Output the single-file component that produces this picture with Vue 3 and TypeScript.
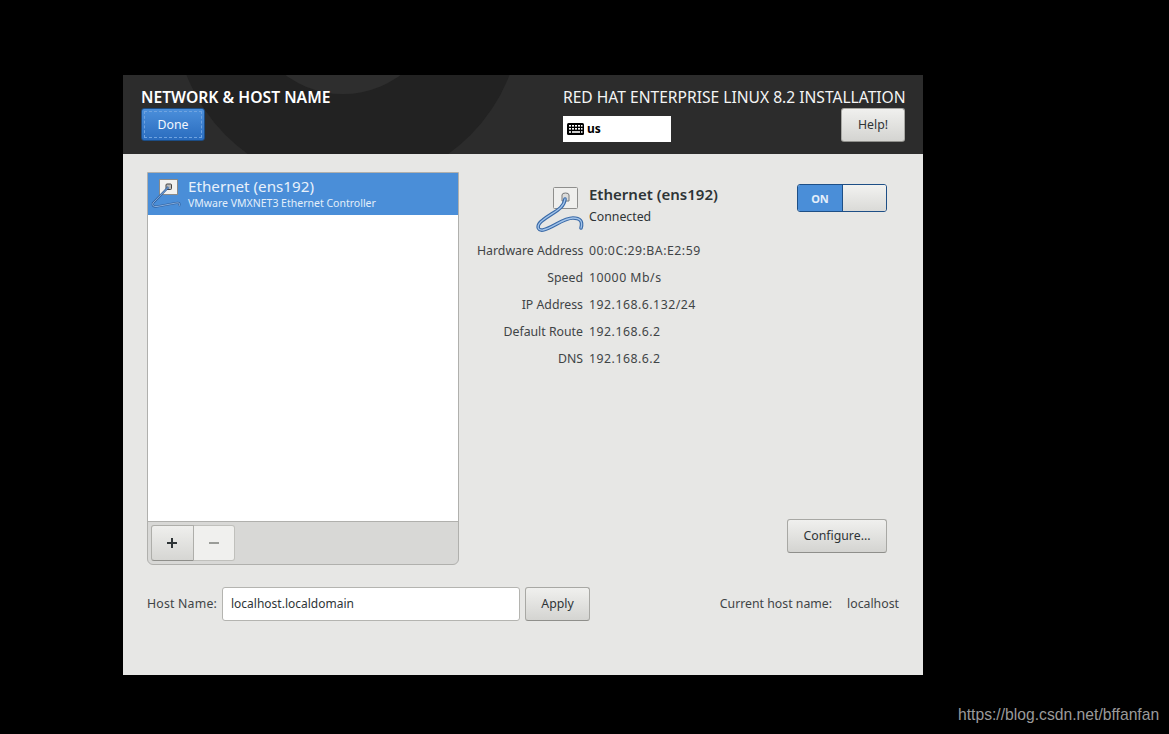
<script setup lang="ts">
const details: [string, string][] = [
  ['Hardware Address', '00:0C:29:BA:E2:59'],
  ['Speed', '10000 Mb/s'],
  ['IP Address', '192.168.6.132/24'],
  ['Default Route', '192.168.6.2'],
  ['DNS', '192.168.6.2'],
]
</script>

<template>
  <div class="screen">
    <div class="window">
      <header class="header">
        <svg class="swirl" width="800" height="79" viewBox="0 0 800 79" aria-hidden="true">
          <circle cx="225" cy="-62" r="173" fill="#222222" />
          <circle cx="220" cy="-77.500" r="96.500" fill="#2e2e2e" />
        </svg>
        <div class="head-left">
          <div class="title">NETWORK &amp; HOST NAME</div>
          <button class="done"><span>Done</span></button>
        </div>
        <div class="head-right">
          <div class="product">RED HAT ENTERPRISE LINUX 8.2 INSTALLATION</div>
          <div class="head-row">
            <div class="kbd">
              <svg width="17" height="12" viewBox="0 0 17 12">
                <rect width="17" height="12" rx="1.5" fill="#000" />
                <g fill="#fff">
                  <rect x="2" y="2" width="2" height="1.6" /><rect x="5" y="2" width="2" height="1.6" /><rect x="8" y="2" width="2" height="1.6" /><rect x="11" y="2" width="2" height="1.6" /><rect x="14" y="2" width="1.5" height="1.6" />
                  <rect x="2" y="5" width="2" height="1.6" /><rect x="5" y="5" width="2" height="1.6" /><rect x="8" y="5" width="2" height="1.6" /><rect x="11" y="5" width="2" height="1.6" /><rect x="14" y="5" width="1.5" height="1.6" />
                  <rect x="2" y="8.2" width="2" height="1.6" /><rect x="5" y="8.2" width="8" height="1.6" /><rect x="14" y="8.2" width="1.5" height="1.6" />
                </g>
              </svg>
              <span>us</span>
            </div>
            <button class="btn help">Help!</button>
          </div>
        </div>
      </header>

      <main class="body">
        <div class="columns">
          <section class="panel">
            <div class="list">
              <div class="row-selected">
                <svg class="row-icon" width="34" height="32" viewBox="0 0 34 32">
                  <rect x="9.500" y="1.500" width="18" height="15" fill="#f2f2f0" stroke="#8a8a88" />
                  <rect x="16" y="6" width="5.500" height="5.500" rx="1" fill="#bdbdbb" stroke="#444" />
                  <path d="M18.500 9 L3 25 Q1.500 29 7 28.500 L26 25 Q31 24 29 28" fill="none" stroke="#2f5f9c" stroke-width="2.200" />
                  <path d="M18.500 9 L3 25 Q1.500 29 7 28.500 L26 25 Q31 24 29 28" fill="none" stroke="#8fb6e4" stroke-width="0.900" />
                </svg>
                <div class="row-text">
                  <div class="row-name">Ethernet (ens192)</div>
                  <div class="row-sub">VMware VMXNET3 Ethernet Controller</div>
                </div>
              </div>
            </div>
            <div class="toolbar">
              <div class="seg">
                <button class="seg-add">
                  <svg width="12" height="12" viewBox="0 0 12 12"><path d="M6 1v10M1 6h10" stroke="#2e3436" stroke-width="2" /></svg>
                </button>
                <button class="seg-remove">
                  <svg width="12" height="12" viewBox="0 0 12 12"><path d="M1 6h10" stroke="#9a9c98" stroke-width="2" /></svg>
                </button>
              </div>
            </div>
          </section>

          <section class="detail">
            <div class="detail-top">
              <svg class="big-icon" width="50" height="52" viewBox="0 0 50 52">
                <rect x="18.500" y="3.500" width="24" height="21" rx="1" fill="#efefed" stroke="#8f8f8d" />
                <path d="M27 17v-6q0-2 3.500-2t3.500 2v6z" fill="#dcdcda" stroke="#77787a" />
                <path d="M30 15 C29 25 18 28 8 36 C1 41 2 47 8 46 C18 44 28 34 38 34 C45 34 48 37 46 44" fill="none" stroke="#3b6ba8" stroke-width="3.600" stroke-linecap="round" />
                <path d="M30 15 C29 25 18 28 8 36 C1 41 2 47 8 46 C18 44 28 34 38 34 C45 34 48 37 46 44" fill="none" stroke="#a3c4ea" stroke-width="1.300" stroke-linecap="round" />
              </svg>
              <div class="detail-name">
                <div class="name">Ethernet (ens192)</div>
                <div class="state">Connected</div>
              </div>
              <div class="toggle">
                <div class="toggle-on">ON</div>
                <div class="toggle-knob"></div>
              </div>
            </div>
            <dl class="facts">
              <template v-for="[label, value] in details" :key="label">
                <dt>{{ label }}</dt>
                <dd>{{ value }}</dd>
              </template>
            </dl>
            <div class="detail-foot">
              <button class="btn configure">Configure...</button>
            </div>
          </section>
        </div>

        <div class="hostline">
          <label class="host-label">Host Name:</label>
          <div class="host-input">localhost.localdomain</div>
          <button class="btn apply">Apply</button>
          <div class="current">
            <span>Current host name:</span>
            <span>localhost</span>
          </div>
        </div>
      </main>
    </div>
    <div class="mark">https://blog.csdn.net/bffanfan</div>
  </div>
</template>

<style>
html, body { margin: 0; background: #000; }
</style>

<style scoped>
.screen {
  position: relative;
  width: 1169px;
  height: 734px;
  background: #000;
  padding: 75px 0 0 123px;
  box-sizing: border-box;
  overflow: hidden;
  font-family: "Noto Sans", "Open Sans", sans-serif;
  font-size: 12.300px;
  color: #2e3436;
}
.window { width: 800px; height: 600px; background: #e7e7e5; display: flex; flex-direction: column; }
button { font-family: inherit; cursor: default; padding: 0; }

.header {
  position: relative;
  height: 79px;
  flex: none;
  background: #2c2c2c;
  overflow: hidden;
  display: flex;
  justify-content: space-between;
  box-sizing: border-box;
  padding: 13px 18px 0;
  color: #fff;
}
.swirl { position: absolute; left: 0; top: 0; }
.head-left, .head-right { position: relative; }
.title { font-size: 15.700px; font-weight: 600; line-height: 19px; white-space: nowrap; }
.done {
  display: block;
  margin-top: 1px;
  width: 64px;
  height: 33px;
  border: 1px solid #1c4d85;
  border-radius: 3px;
  background: linear-gradient(#4b8fdb, #2a6cbe);
  color: #f2f7fd;
  font-size: 12.300px;
  padding: 2px;
}
.done span {
  display: flex; align-items: center; justify-content: center;
  height: 100%;
  border: 1px dashed #6fa3e0;
  box-sizing: border-box;
}
.head-right { width: 342px; }
.product { font-size: 15.600px; line-height: 19px; white-space: nowrap; color: #f4f4f4; }
.head-row { display: flex; justify-content: space-between; align-items: flex-start; }
.kbd {
  margin-top: 9px;
  width: 108px;
  height: 26px;
  background: #fff;
  color: #000;
  display: flex;
  align-items: center;
  gap: 3px;
  padding: 0 0 1px 4px;
  box-sizing: border-box;
  font-size: 12px;
  font-weight: 700;
}
.btn {
  border: 1px solid #a8a8a4;
  border-bottom-color: #8f8f8b;
  border-radius: 3px;
  background: linear-gradient(#f0f0ee, #d4d4d1);
  color: #2e3436;
  font-size: 12.300px;
  padding-bottom: 2px;
}
.help { width: 64px; height: 34px; margin-top: 1px; }

.body { flex: 1; display: flex; flex-direction: column; padding: 18px 24px 0; }
.columns { display: flex; height: 393px; }
.panel {
  width: 312px;
  box-sizing: border-box;
  border: 1px solid #b0b0ad;
  border-radius: 0 0 6px 6px;
  background: #d8d8d6;
  display: flex;
  flex-direction: column;
}
.list { flex: 1; background: #fff; border-bottom: 1px solid #b0b0ad; }
.row-selected {
  height: 42px;
  background: #4a8ed8;
  color: #fff;
  display: flex;
  align-items: center;
}
.row-icon { margin-left: 2px; flex: none; }
.row-text { margin-left: 4px; }
.row-name { font-size: 15.200px; line-height: 18px; color: #e8f1fb; white-space: nowrap; }
.row-sub { font-size: 10.500px; line-height: 15px; margin-top: 1px; color: #e3eefa; white-space: nowrap; }
.toolbar { height: 42px; flex: none; padding: 3px 3px; box-sizing: border-box; }
.seg { display: flex; width: 84px; height: 36px; }
.seg button { flex: none; height: 36px; display: flex; align-items: center; justify-content: center; border: 1px solid #aeaeaa; }
.seg-add { width: 43px; padding-right: 2px; border-radius: 3px 0 0 3px; background: linear-gradient(#efefed, #d6d6d3); border-bottom-color: #8f8f8b !important; }
.seg-remove { width: 41px; border-left: 0 !important; border-radius: 0 3px 3px 0; background: #f0f0ee; border-color: #c0c0bc !important; }

.detail { flex: 1; display: flex; flex-direction: column; padding-left: 18px; }
.detail-top { display: flex; height: 63px; }
.big-icon { margin-left: 58px; margin-top: 12px; flex: none; }
.detail-name { margin-left: 4px; margin-top: 12px; width: 208px; }
.name { font-size: 15px; font-weight: 600; line-height: 20px; white-space: nowrap; }
.state { line-height: 19px; margin-top: 3px; font-size: 12.300px; }
.toggle {
  margin-top: 12px;
  width: 90px;
  height: 28px;
  box-sizing: border-box;
  border: 1px solid #1e4f86;
  border-radius: 3px;
  display: flex;
  overflow: hidden;
}
.toggle-on { width: 44px; background: #4a8ed8; color: #e4eefa; font-size: 11px; font-weight: 700; display: flex; align-items: center; justify-content: center; }
.toggle-knob { flex: 1; background: linear-gradient(#f2f2f0, #dadad7); border-left: 1px solid #1e4f86; }

.facts {
  margin: 2px 0 0;
  display: grid;
  grid-template-columns: 106px auto;
  column-gap: 6px;
  grid-auto-rows: 27px;
  align-items: center;
}
.facts dt { text-align: right; color: #3f4446; white-space: nowrap; }
.facts dd { margin: 0; color: #3f4446; letter-spacing: 0.500px; }
.detail-foot { margin-top: auto; display: flex; justify-content: flex-end; padding-right: 12px; padding-bottom: 12px; }
.configure { width: 100px; height: 34px; }

.hostline { display: flex; align-items: center; height: 34px; margin-top: 22px; }
.host-label { width: 75px; flex: none; color: #3f4446; letter-spacing: 0.200px; padding-bottom: 2px; }
.host-input {
  width: 298px;
  height: 34px;
  box-sizing: border-box;
  flex: none;
  background: #fff;
  border: 1px solid #b4b4b0;
  border-radius: 3px;
  padding: 0 0 2px 8px;
  display: flex;
  align-items: center;
  font-size: 12px;
  color: #2e3436;
}
.apply { width: 65px; height: 34px; margin-left: 5px; flex: none; }
.current { margin-left: auto; display: flex; gap: 15px; color: #3f4446; white-space: nowrap; padding-bottom: 2px; }

.mark {
  position: absolute;
  left: 958px;
  top: 705px;
  font-family: "Liberation Sans", Arial, sans-serif;
  font-size: 15.700px;
  line-height: 20px;
  color: #9a9a9a;
  white-space: nowrap;
}
</style>
